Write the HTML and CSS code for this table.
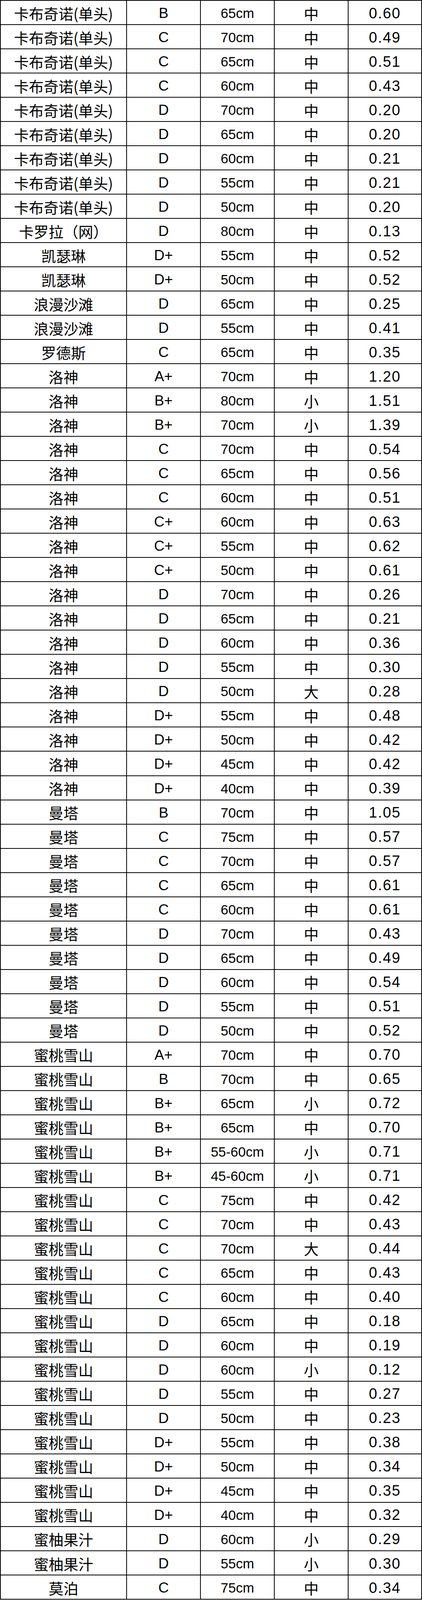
FILE: index.html
```html
<!DOCTYPE html>
<html lang="zh-CN">
<head>
<meta charset="utf-8">
<title>价格表</title>
<link rel="stylesheet" href="styles.css">
</head>
<body>
<div class="sheet">
<div class="row"><span class="c name">卡布奇诺(单头)</span><span class="c grade">B</span><span class="c size">65cm</span><span class="c spec">中</span><span class="c price">0.60</span></div>
<div class="row"><span class="c name">卡布奇诺(单头)</span><span class="c grade">C</span><span class="c size">70cm</span><span class="c spec">中</span><span class="c price">0.49</span></div>
<div class="row"><span class="c name">卡布奇诺(单头)</span><span class="c grade">C</span><span class="c size">65cm</span><span class="c spec">中</span><span class="c price">0.51</span></div>
<div class="row"><span class="c name">卡布奇诺(单头)</span><span class="c grade">C</span><span class="c size">60cm</span><span class="c spec">中</span><span class="c price">0.43</span></div>
<div class="row"><span class="c name">卡布奇诺(单头)</span><span class="c grade">D</span><span class="c size">70cm</span><span class="c spec">中</span><span class="c price">0.20</span></div>
<div class="row"><span class="c name">卡布奇诺(单头)</span><span class="c grade">D</span><span class="c size">65cm</span><span class="c spec">中</span><span class="c price">0.20</span></div>
<div class="row"><span class="c name">卡布奇诺(单头)</span><span class="c grade">D</span><span class="c size">60cm</span><span class="c spec">中</span><span class="c price">0.21</span></div>
<div class="row"><span class="c name">卡布奇诺(单头)</span><span class="c grade">D</span><span class="c size">55cm</span><span class="c spec">中</span><span class="c price">0.21</span></div>
<div class="row"><span class="c name">卡布奇诺(单头)</span><span class="c grade">D</span><span class="c size">50cm</span><span class="c spec">中</span><span class="c price">0.20</span></div>
<div class="row"><span class="c name">卡罗拉（网）</span><span class="c grade">D</span><span class="c size">80cm</span><span class="c spec">中</span><span class="c price">0.13</span></div>
<div class="row"><span class="c name">凯瑟琳</span><span class="c grade">D+</span><span class="c size">55cm</span><span class="c spec">中</span><span class="c price">0.52</span></div>
<div class="row"><span class="c name">凯瑟琳</span><span class="c grade">D+</span><span class="c size">50cm</span><span class="c spec">中</span><span class="c price">0.52</span></div>
<div class="row"><span class="c name">浪漫沙滩</span><span class="c grade">D</span><span class="c size">65cm</span><span class="c spec">中</span><span class="c price">0.25</span></div>
<div class="row"><span class="c name">浪漫沙滩</span><span class="c grade">D</span><span class="c size">55cm</span><span class="c spec">中</span><span class="c price">0.41</span></div>
<div class="row"><span class="c name">罗德斯</span><span class="c grade">C</span><span class="c size">65cm</span><span class="c spec">中</span><span class="c price">0.35</span></div>
<div class="row"><span class="c name">洛神</span><span class="c grade">A+</span><span class="c size">70cm</span><span class="c spec">中</span><span class="c price">1.20</span></div>
<div class="row"><span class="c name">洛神</span><span class="c grade">B+</span><span class="c size">80cm</span><span class="c spec">小</span><span class="c price">1.51</span></div>
<div class="row"><span class="c name">洛神</span><span class="c grade">B+</span><span class="c size">70cm</span><span class="c spec">小</span><span class="c price">1.39</span></div>
<div class="row"><span class="c name">洛神</span><span class="c grade">C</span><span class="c size">70cm</span><span class="c spec">中</span><span class="c price">0.54</span></div>
<div class="row"><span class="c name">洛神</span><span class="c grade">C</span><span class="c size">65cm</span><span class="c spec">中</span><span class="c price">0.56</span></div>
<div class="row"><span class="c name">洛神</span><span class="c grade">C</span><span class="c size">60cm</span><span class="c spec">中</span><span class="c price">0.51</span></div>
<div class="row"><span class="c name">洛神</span><span class="c grade">C+</span><span class="c size">60cm</span><span class="c spec">中</span><span class="c price">0.63</span></div>
<div class="row"><span class="c name">洛神</span><span class="c grade">C+</span><span class="c size">55cm</span><span class="c spec">中</span><span class="c price">0.62</span></div>
<div class="row"><span class="c name">洛神</span><span class="c grade">C+</span><span class="c size">50cm</span><span class="c spec">中</span><span class="c price">0.61</span></div>
<div class="row"><span class="c name">洛神</span><span class="c grade">D</span><span class="c size">70cm</span><span class="c spec">中</span><span class="c price">0.26</span></div>
<div class="row"><span class="c name">洛神</span><span class="c grade">D</span><span class="c size">65cm</span><span class="c spec">中</span><span class="c price">0.21</span></div>
<div class="row"><span class="c name">洛神</span><span class="c grade">D</span><span class="c size">60cm</span><span class="c spec">中</span><span class="c price">0.36</span></div>
<div class="row"><span class="c name">洛神</span><span class="c grade">D</span><span class="c size">55cm</span><span class="c spec">中</span><span class="c price">0.30</span></div>
<div class="row"><span class="c name">洛神</span><span class="c grade">D</span><span class="c size">50cm</span><span class="c spec">大</span><span class="c price">0.28</span></div>
<div class="row"><span class="c name">洛神</span><span class="c grade">D+</span><span class="c size">55cm</span><span class="c spec">中</span><span class="c price">0.48</span></div>
<div class="row"><span class="c name">洛神</span><span class="c grade">D+</span><span class="c size">50cm</span><span class="c spec">中</span><span class="c price">0.42</span></div>
<div class="row"><span class="c name">洛神</span><span class="c grade">D+</span><span class="c size">45cm</span><span class="c spec">中</span><span class="c price">0.42</span></div>
<div class="row"><span class="c name">洛神</span><span class="c grade">D+</span><span class="c size">40cm</span><span class="c spec">中</span><span class="c price">0.39</span></div>
<div class="row"><span class="c name">曼塔</span><span class="c grade">B</span><span class="c size">70cm</span><span class="c spec">中</span><span class="c price">1.05</span></div>
<div class="row"><span class="c name">曼塔</span><span class="c grade">C</span><span class="c size">75cm</span><span class="c spec">中</span><span class="c price">0.57</span></div>
<div class="row"><span class="c name">曼塔</span><span class="c grade">C</span><span class="c size">70cm</span><span class="c spec">中</span><span class="c price">0.57</span></div>
<div class="row"><span class="c name">曼塔</span><span class="c grade">C</span><span class="c size">65cm</span><span class="c spec">中</span><span class="c price">0.61</span></div>
<div class="row"><span class="c name">曼塔</span><span class="c grade">C</span><span class="c size">60cm</span><span class="c spec">中</span><span class="c price">0.61</span></div>
<div class="row"><span class="c name">曼塔</span><span class="c grade">D</span><span class="c size">70cm</span><span class="c spec">中</span><span class="c price">0.43</span></div>
<div class="row"><span class="c name">曼塔</span><span class="c grade">D</span><span class="c size">65cm</span><span class="c spec">中</span><span class="c price">0.49</span></div>
<div class="row"><span class="c name">曼塔</span><span class="c grade">D</span><span class="c size">60cm</span><span class="c spec">中</span><span class="c price">0.54</span></div>
<div class="row"><span class="c name">曼塔</span><span class="c grade">D</span><span class="c size">55cm</span><span class="c spec">中</span><span class="c price">0.51</span></div>
<div class="row"><span class="c name">曼塔</span><span class="c grade">D</span><span class="c size">50cm</span><span class="c spec">中</span><span class="c price">0.52</span></div>
<div class="row"><span class="c name">蜜桃雪山</span><span class="c grade">A+</span><span class="c size">70cm</span><span class="c spec">中</span><span class="c price">0.70</span></div>
<div class="row"><span class="c name">蜜桃雪山</span><span class="c grade">B</span><span class="c size">70cm</span><span class="c spec">中</span><span class="c price">0.65</span></div>
<div class="row"><span class="c name">蜜桃雪山</span><span class="c grade">B+</span><span class="c size">65cm</span><span class="c spec">小</span><span class="c price">0.72</span></div>
<div class="row"><span class="c name">蜜桃雪山</span><span class="c grade">B+</span><span class="c size">65cm</span><span class="c spec">中</span><span class="c price">0.70</span></div>
<div class="row"><span class="c name">蜜桃雪山</span><span class="c grade">B+</span><span class="c size">55-60cm</span><span class="c spec">小</span><span class="c price">0.71</span></div>
<div class="row"><span class="c name">蜜桃雪山</span><span class="c grade">B+</span><span class="c size">45-60cm</span><span class="c spec">小</span><span class="c price">0.71</span></div>
<div class="row"><span class="c name">蜜桃雪山</span><span class="c grade">C</span><span class="c size">75cm</span><span class="c spec">中</span><span class="c price">0.42</span></div>
<div class="row"><span class="c name">蜜桃雪山</span><span class="c grade">C</span><span class="c size">70cm</span><span class="c spec">中</span><span class="c price">0.43</span></div>
<div class="row"><span class="c name">蜜桃雪山</span><span class="c grade">C</span><span class="c size">70cm</span><span class="c spec">大</span><span class="c price">0.44</span></div>
<div class="row"><span class="c name">蜜桃雪山</span><span class="c grade">C</span><span class="c size">65cm</span><span class="c spec">中</span><span class="c price">0.43</span></div>
<div class="row"><span class="c name">蜜桃雪山</span><span class="c grade">C</span><span class="c size">60cm</span><span class="c spec">中</span><span class="c price">0.40</span></div>
<div class="row"><span class="c name">蜜桃雪山</span><span class="c grade">D</span><span class="c size">65cm</span><span class="c spec">中</span><span class="c price">0.18</span></div>
<div class="row"><span class="c name">蜜桃雪山</span><span class="c grade">D</span><span class="c size">60cm</span><span class="c spec">中</span><span class="c price">0.19</span></div>
<div class="row"><span class="c name">蜜桃雪山</span><span class="c grade">D</span><span class="c size">60cm</span><span class="c spec">小</span><span class="c price">0.12</span></div>
<div class="row"><span class="c name">蜜桃雪山</span><span class="c grade">D</span><span class="c size">55cm</span><span class="c spec">中</span><span class="c price">0.27</span></div>
<div class="row"><span class="c name">蜜桃雪山</span><span class="c grade">D</span><span class="c size">50cm</span><span class="c spec">中</span><span class="c price">0.23</span></div>
<div class="row"><span class="c name">蜜桃雪山</span><span class="c grade">D+</span><span class="c size">55cm</span><span class="c spec">中</span><span class="c price">0.38</span></div>
<div class="row"><span class="c name">蜜桃雪山</span><span class="c grade">D+</span><span class="c size">50cm</span><span class="c spec">中</span><span class="c price">0.34</span></div>
<div class="row"><span class="c name">蜜桃雪山</span><span class="c grade">D+</span><span class="c size">45cm</span><span class="c spec">中</span><span class="c price">0.35</span></div>
<div class="row"><span class="c name">蜜桃雪山</span><span class="c grade">D+</span><span class="c size">40cm</span><span class="c spec">中</span><span class="c price">0.32</span></div>
<div class="row"><span class="c name">蜜柚果汁</span><span class="c grade">D</span><span class="c size">60cm</span><span class="c spec">小</span><span class="c price">0.29</span></div>
<div class="row"><span class="c name">蜜柚果汁</span><span class="c grade">D</span><span class="c size">55cm</span><span class="c spec">小</span><span class="c price">0.30</span></div>
<div class="row"><span class="c name">莫泊</span><span class="c grade">C</span><span class="c size">75cm</span><span class="c spec">中</span><span class="c price">0.34</span></div>
</div>
</body>
</html>
```

FILE: styles.css
```css
html, body {
  margin: 0;
  padding: 0;
  background: #fff;
}

body {
  color: #000;
  font-family: "Noto Sans CJK SC", "Liberation Sans", sans-serif;
}

.sheet {
  display: grid;
  grid-template-columns: 321px 187px 187px 187px 186px;
  grid-template-rows: repeat(66, calc((100vh - 134.5px) / 66));
  gap: 2px;
  padding: 2px;
  width: max-content;
  background: #000;
}

.row {
  display: contents;
}

.c {
  display: flex;
  align-items: center;
  justify-content: center;
  padding-top: 3px;
  background: #fff;
  white-space: nowrap;
  line-height: 1;
  overflow: hidden;
}

.name,
.spec {
  font-family: "Noto Sans CJK SC", sans-serif;
  font-size: 38px;
}

.grade {
  font-family: "Liberation Sans", "Noto Sans CJK SC", sans-serif;
  font-size: 37px;
}

.size {
  font-family: "Liberation Sans", sans-serif;
  font-size: 35px;
}

.price {
  font-family: "Liberation Sans", sans-serif;
  font-size: 38px;
  letter-spacing: 2px;
}
```
